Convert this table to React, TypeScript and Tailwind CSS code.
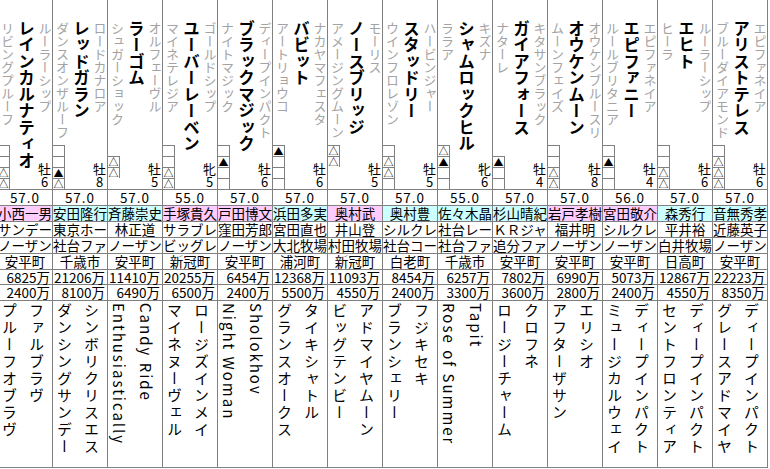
type Horse = {
  name: string;
  sire: string;
  dam: string;
  marks: (string | null)[];
  sex: string;
  age: string;
  weight: string;
  jockey: string;
  east: boolean;
  owner: string;
  breeder: string;
  place: string;
  prize1: string;
  prize2: string;
  damSire: string;
  granddam: string;
};

const horses: Horse[] = [
  { name: "レインカルナティオ", sire: "ルーラーシップ", dam: "リビングプルーフ", marks: ["", "", "△", "△"], sex: "牡", age: "6", weight: "57.0", jockey: "小西一男", east: true, owner: "サンデー", breeder: "ノーザン", place: "安平町", prize1: "6825万", prize2: "2400万", damSire: "ファルブラヴ", granddam: "プルーフオブラヴ" },
  { name: "レッドガラン", sire: "ロードカナロア", dam: "ダンスオンザルーフ", marks: ["", "", "▲", "△"], sex: "牡", age: "8", weight: "57.0", jockey: "安田隆行", east: false, owner: "東京ホー", breeder: "社台ファ", place: "千歳市", prize1: "21206万", prize2: "8100万", damSire: "シンボリクリスエス", granddam: "ダンシングサンデー" },
  { name: "ラーゴム", sire: "オルフェーヴル", dam: "シュガーショック", marks: [null, "△", "△", null], sex: "牡", age: "5", weight: "57.0", jockey: "斉藤崇史", east: false, owner: "林正道", breeder: "ノーザン", place: "安平町", prize1: "11410万", prize2: "6490万", damSire: "Candy Ride", granddam: "Enthusiastically" },
  { name: "ユーバーレーベン", sire: "ゴールドシップ", dam: "マイネテレジア", marks: ["", "", "△", "△"], sex: "牝", age: "5", weight: "55.0", jockey: "手塚貴久", east: true, owner: "サラブレ", breeder: "ビッグレ", place: "新冠町", prize1: "20255万", prize2: "6500万", damSire: "ロージズインメイ", granddam: "マイネヌーヴェル" },
  { name: "ブラックマジック", sire: "ディープインパクト", dam: "ナイトマジック", marks: ["", "▲", "", ""], sex: "牡", age: "6", weight: "57.0", jockey: "戸田博文", east: true, owner: "窪田芳郎", breeder: "ノーザン", place: "安平町", prize1: "6454万", prize2: "2400万", damSire: "Sholokhov", granddam: "Night Woman" },
  { name: "バビット", sire: "ナカヤマフェスタ", dam: "アートリョウコ", marks: ["▲", "", "", ""], sex: "牡", age: "6", weight: "57.0", jockey: "浜田多実", east: false, owner: "宮田直也", breeder: "大北牧場", place: "浦河町", prize1: "12368万", prize2: "5500万", damSire: "タイキシャトル", granddam: "グランスオークス" },
  { name: "ノースブリッジ", sire: "モーリス", dam: "アメージングムーン", marks: ["△", "△", null, null], sex: "牡", age: "5", weight: "57.0", jockey: "奥村武", east: true, owner: "井山登", breeder: "村田牧場", place: "新冠町", prize1: "11093万", prize2: "4550万", damSire: "アドマイヤムーン", granddam: "ビッグテンビー" },
  { name: "スタッドリー", sire: "ハービンジャー", dam: "ウインフロレゾン", marks: ["", "△", "△", ""], sex: "牡", age: "5", weight: "57.0", jockey: "奥村豊", east: false, owner: "シルクレ", breeder: "社台コー", place: "白老町", prize1: "8454万", prize2: "2400万", damSire: "フジキセキ", granddam: "ブランシェリー" },
  { name: "シャムロックヒル", sire: "キズナ", dam: "ララア", marks: ["△", "▲", "", ""], sex: "牝", age: "6", weight: "55.0", jockey: "佐々木晶", east: false, owner: "社台レー", breeder: "社台ファ", place: "千歳市", prize1: "6257万", prize2: "3300万", damSire: "Tapit", granddam: "Rose of Summer" },
  { name: "ガイアフォース", sire: "キタサンブラック", dam: "ナターレ", marks: [null, "▲", "", ""], sex: "牡", age: "4", weight: "57.0", jockey: "杉山晴紀", east: false, owner: "ＫＲジャ", breeder: "追分ファ", place: "安平町", prize1: "7802万", prize2: "3600万", damSire: "クロフネ", granddam: "ロージーチャーム" },
  { name: "オウケンムーン", sire: "オウケンブルースリ", dam: "ムーンフェイズ", marks: ["", "", "△", "△"], sex: "牡", age: "8", weight: "57.0", jockey: "岩戸孝樹", east: true, owner: "福井明", breeder: "ノーザン", place: "安平町", prize1: "6990万", prize2: "2800万", damSire: "エリシオ", granddam: "アフターザサン" },
  { name: "エピファニー", sire: "エピファネイア", dam: "ルールブリタニア", marks: ["", "▲", "", ""], sex: "牡", age: "4", weight: "56.0", jockey: "宮田敬介", east: true, owner: "シルクレ", breeder: "ノーザン", place: "安平町", prize1: "5073万", prize2: "2400万", damSire: "ディープインパクト", granddam: "ミュージカルウェイ" },
  { name: "エヒト", sire: "ルーラーシップ", dam: "ヒーラ", marks: ["", "", "△", "△"], sex: "牡", age: "6", weight: "57.0", jockey: "森秀行", east: false, owner: "平井裕", breeder: "白井牧場", place: "日高町", prize1: "12867万", prize2: "4550万", damSire: "ディープインパクト", granddam: "セントフロンティア" },
  { name: "アリストテレス", sire: "エピファネイア", dam: "ブルーダイアモンド", marks: ["", "△", "△", "△"], sex: "牡", age: "6", weight: "57.0", jockey: "音無秀孝", east: false, owner: "近藤英子", breeder: "ノーザン", place: "安平町", prize1: "22223万", prize2: "8350万", damSire: "ディープインパクト", granddam: "グレースアドマイヤ" },
];

const vert = "[writing-mode:vertical-rl] whitespace-nowrap";

function Marks({ marks }: { marks: (string | null)[] }) {
  return (
    <div className="flex w-[12px] flex-col self-start">
      {marks.map((m, i) =>
        m === null ? (
          <div key={i} className="h-[11px]" />
        ) : (
          <div
            key={i}
            className="flex h-[11px] items-center justify-center border-t border-r border-[#808080] text-[10px] leading-none"
          >
            {m}
          </div>
        )
      )}
    </div>
  );
}

function Column({ h }: { h: Horse }) {
  const cell = "border-b border-[#808080] text-[13.5px] leading-[15px] whitespace-nowrap";
  return (
    <div className="flex w-[55px] shrink-0 flex-col border-r border-[#808080]">
      <div className="flex h-[190px] flex-row border-b border-[#808080]">
        <div className="flex w-[18px] flex-col items-center">
          <div className="h-[22px] shrink-0" />
          <div className={`${vert} text-[13px] leading-[16px] text-[#a3a3a3]`}>{h.dam}</div>
          <div className="flex-1" />
          <Marks marks={h.marks} />
        </div>
        <div className="flex w-[21px] flex-col items-center">
          <div className="h-[20px] shrink-0" />
          <div className={`${vert} text-[16.5px] font-bold leading-[20px] text-black`}>{h.name}</div>
        </div>
        <div className="flex w-[15px] flex-col items-center">
          <div className="h-[22px] shrink-0" />
          <div className={`${vert} text-[13px] leading-[16px] text-[#a3a3a3]`}>{h.sire}</div>
          <div className="flex-1" />
          <div className="flex flex-col items-center pb-[1px] text-[13px] leading-[13px]">
            <span>{h.sex}</span>
            <span>{h.age}</span>
          </div>
        </div>
      </div>
      <div className={`${cell} h-[16px] text-center tracking-[1px]`}>{h.weight}</div>
      <div className={`${cell} h-[16px] text-center ${h.east ? "bg-[#ffccff]" : "bg-[#ccffff]"}`}>{h.jockey}</div>
      <div className={`${cell} h-[16px] text-center`}>{h.owner}</div>
      <div className={`${cell} h-[16px] text-center`}>{h.breeder}</div>
      <div className={`${cell} h-[16px] text-center`}>{h.place}</div>
      <div className={`${cell} h-[15px] pr-[2px] text-right`}>{h.prize1}</div>
      <div className={`${cell} h-[16px] pr-[2px] text-right`}>{h.prize2}</div>
      <div className="flex flex-1 flex-row-reverse justify-between border-b border-[#808080] pl-[3px] pr-[7px]">
        <div className="flex w-[17px] flex-col">
          <div className="h-[2px] shrink-0" />
          <div className={`${vert} text-[15px] leading-[17px] tracking-[2px]`}>{h.damSire}</div>
        </div>
        <div className="flex w-[17px] flex-col">
          <div className="h-[2px] shrink-0" />
          <div className={`${vert} text-[15px] leading-[17px] tracking-[2px]`}>{h.granddam}</div>
        </div>
      </div>
    </div>
  );
}

export default function App() {
  return (
    <div className="h-[469px] w-[770px] overflow-hidden bg-white font-['Noto_Sans_CJK_JP',sans-serif] text-black">
      <div className="ml-[-2px] flex h-[468px] flex-row">
        {horses.map((h) => (
          <Column key={h.name} h={h} />
        ))}
      </div>
    </div>
  );
}
